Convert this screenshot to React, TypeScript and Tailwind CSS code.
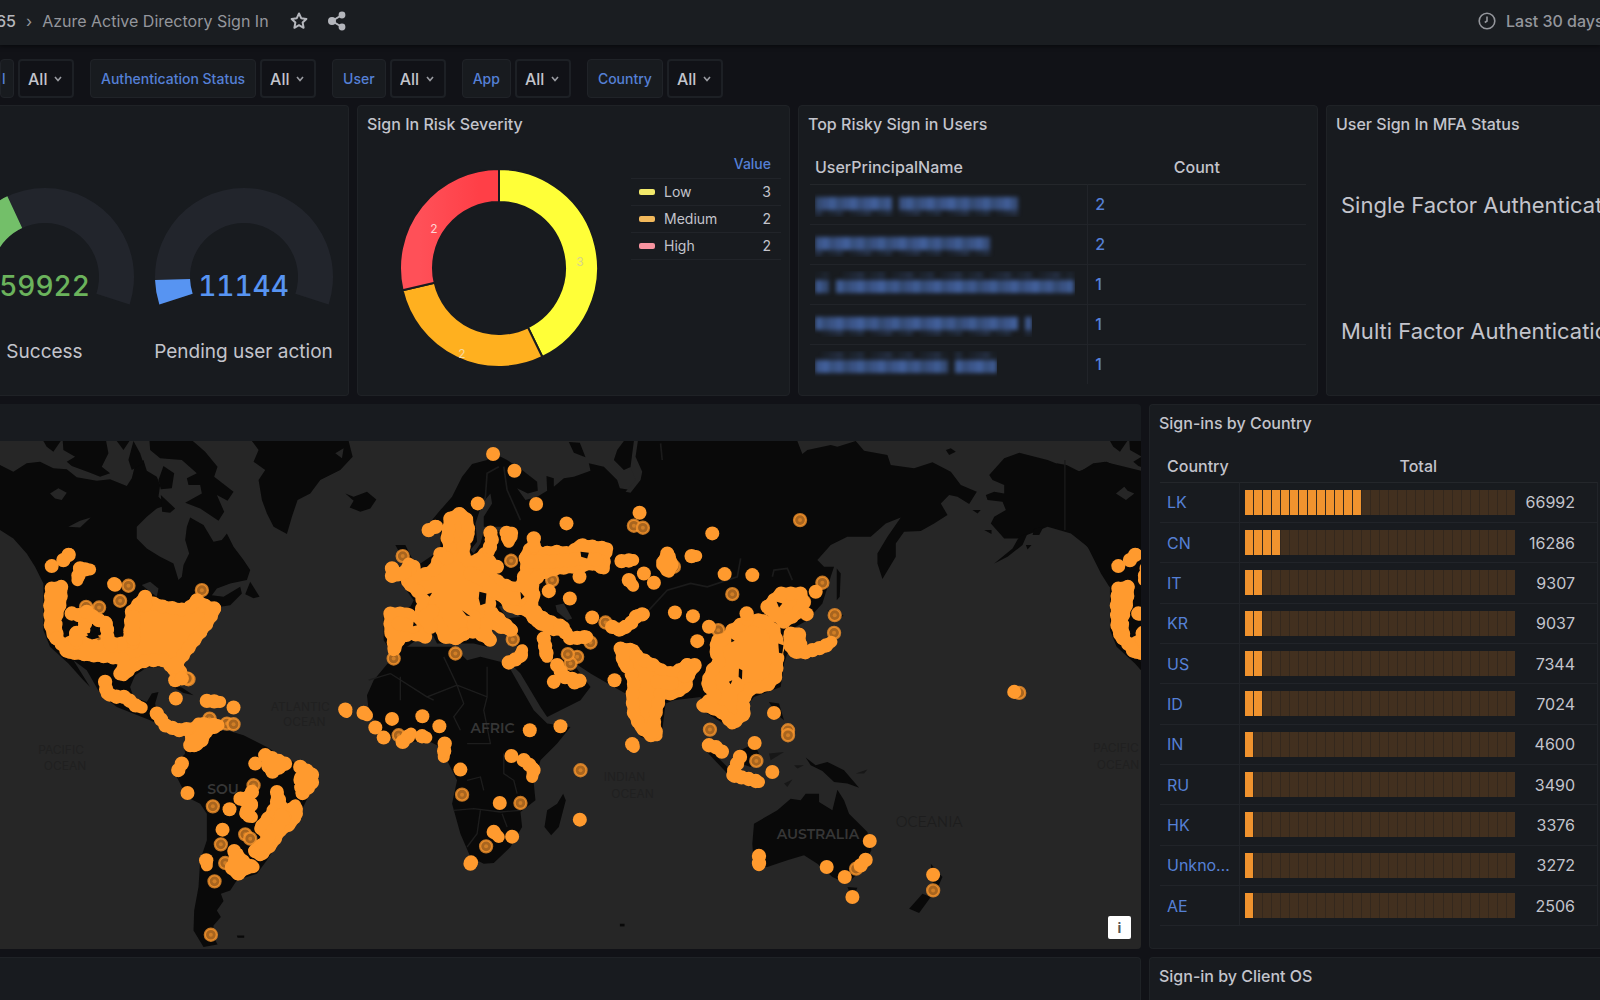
import type { ReactNode } from "react"

interface MapRegion {
  id: string
  x: number
  y: number
  masses?: string[]
  chains?: string[]
  dots?: number[][]
  rings?: number[][]
}

const filters = [
  { id: "protocol", label: "l", first: true },
  { id: "auth-status", label: "Authentication Status" },
  { id: "user", label: "User" },
  { id: "app", label: "App" },
  { id: "country", label: "Country" },
]

const severities = [
  { name: "Low", value: 3, color: "bg-[#f2e96b]" },
  { name: "Medium", value: 2, color: "bg-[#f2b95c]" },
  { name: "High", value: 2, color: "bg-[#f7939f]" },
]

// length is the width of the masked name
const riskyUsers = [
  { length: 209, gap: 76, offset: 0, count: 2 },
  { length: 181, gap: -20, offset: 0, count: 2 },
  { length: 260, gap: 12, offset: 3, count: 1 },
  { length: 217, gap: 200, offset: 0, count: 1 },
  { length: 182, gap: 130, offset: 3, count: 1 },
]

const countries = [
  { code: "LK", total: 66992, cells: 13 },
  { code: "CN", total: 16286, cells: 4 },
  { code: "IT", total: 9307, cells: 2 },
  { code: "KR", total: 9037, cells: 2 },
  { code: "US", total: 7344, cells: 2 },
  { code: "ID", total: 7024, cells: 2 },
  { code: "IN", total: 4600, cells: 1 },
  { code: "RU", total: 3490, cells: 1 },
  { code: "HK", total: 3376, cells: 1 },
  { code: "Unknown", total: 3272, cells: 1 },
  { code: "AE", total: 2506, cells: 1 },
]

const northAmerica: MapRegion = {
  id: "north-america",
  x: 0,
  y: 0,
  masses: [
    "M395 545L430 505L445 515L490 530L560 540L590 510L620 530L645 535L620 580L590 620L560 660L530 700L545 735L520 720L500 690L440 690L400 705L370 735L360 730L380 690L330 680L270 675L200 665L195 650L230 620L250 640L300 650L330 640L385 640L390 600Z",
    "M155 475L185 470L180 520L165 570L170 610L165 625L152 590L150 520Z",
  ],
  chains: [
    "M170 625L210 668",
    "M215 550L260 560L250 600L225 610L230 640",
    "M260 545L285 565L320 580L322 620L335 650",
    "M315 755L320 790L350 800L375 800L405 825L425 832",
    "M190 390L208 372",
    "M240 415L232 450",
    "M255 418L270 418",
    "M435 500L435 530",
    "M400 560L400 640",
  ],
  dots: [[155, 408], [342, 462], [345, 464]],
  rings: [[385, 467], [605, 480], [360, 512], [258, 530], [297, 532], [565, 747], [300, 650], [303, 635]],
}

const regions: MapRegion[] = [
  {
    id: "south-america",
    x: 0,
    y: 750,
    masses: [
      "M570 195L575 165L595 130L655 135L620 150L605 180L590 195Z",
      "M830 335L830 370L815 400L790 430L780 445L810 465L790 490L762 510L780 525L815 490L840 450L870 430L890 400L885 375L870 390L850 390L840 370Z",
      "M702 512L705 545L692 560L712 582L740 562L760 560L735 550Z",
    ],
    chains: [
      "M470 100L495 135L535 150L570 145",
      "M620 62L660 65",
      "M795 225L830 240L855 250L815 275L800 250",
      "M900 260L935 280L935 310L905 340L900 290",
      "M755 335L740 355L720 355L755 370L735 400L755 410",
      "M618 540L620 555",
      "M545 250L533 272",
      "M785 505L810 460L855 410L825 400",
      "M918 275L915 320",
    ],
    dots: [[527, 55], [700, 82], [562, 338], [765, 250], [688, 387], [667, 448], [525, 0], [545, -5]],
    rings: [[628, 115], [680, 130], [700, 132], [760, 315], [735, 462], [750, 475], [675, 548], [638, 378], [662, 492], [643, 603], [632, 763], [560, -5]],
  },
  {
    id: "europe",
    x: 1020,
    y: 0,
    masses: [
      "M330 265L360 250L380 270L385 310L370 340L370 390L400 400L435 370L450 400L470 410L440 410L450 440L490 465L540 480L550 440L560 420L555 380L570 355L600 370L650 365L690 370L720 345L760 350L800 355L790 380L790 415L760 400L700 410L650 415L600 430L575 460L580 500L570 530L600 560L640 580L670 590L640 600L590 575L560 540L510 530L490 500L450 480L445 540L490 580L515 600L480 590L440 570L430 600L450 630L410 605L380 605L350 625L310 620L300 580L270 570L240 570L240 550L250 520L240 490L200 455L205 400L220 410L230 440L260 430L280 420L300 380L330 360L320 320Z",
      "M150 550L200 550L250 590L255 620L215 610L180 620L160 660L160 630L150 600Z",
      "M980 370L970 390L965 405L985 425L995 400Z",
      "M498 308L515 308L505 335Z",
      "M840 655L880 660L890 680L930 700L970 725L1000 730L1040 705L1062 705L1040 740L1035 770L995 790L960 790L950 830L940 870L948 915L930 915L900 890L880 850L875 800L880 760L870 720L850 700Z",
    ],
    chains: [
      "M265 300L290 288",
      "M155 415L155 440L180 430L210 420",
      "M450 308L455 325L445 365",
      "M580 325L580 355",
      "M610 625L620 680L612 650",
      "M660 590L690 625L740 620",
      "M505 697L540 680L545 660",
      "M650 705L670 740L720 752L700 757",
      "M1053 378L1067 378",
      "M865 450L878 467",
      "M815 590L840 600L870 580L890 555L910 552",
      "M843 393L878 390",
      "M875 942L880 950",
      "M300 372L320 385",
      "M270 590L250 560L280 540",
      "M390 430L430 450L470 490L540 510",
      "M570 395L640 395L720 385L780 390",
      "M400 560L400 600",
      "M175 580L225 590",
      "M950 755L1010 760",
    ],
    dots: [[458, 72], [522, 122], [412, 220], [587, 222], [678, 280], [897, 248], [1115, 310], [1152, 432], [1235, 435], [1003, 547], [1057, 558], [1070, 633], [717, 440], [688, 505], [625, 483], [910, 430], [940, 458], [755, 562], [822, 750], [640, 755]],
    rings: [[880, 287], [907, 293], [1175, 492], [187, 378], [635, 450], [512, 392], [1000, 410], [795, 577], [517, 628], [345, 670], [160, 685], [710, 680], [690, 700], [682, 672], [750, 637]],
  },
  {
    id: "africa",
    x: 1020,
    y: 750,
    chains: [
      "M313 190L310 230",
      "M550 240L580 265L575 290",
      "M460 455L475 470",
      "M15 88L18 95",
      "M70 98L80 105",
      "M245 168L258 172",
      "M187 185L212 160",
    ],
    dots: [[105, 142], [130, 172], [155, 116], [246, 108], [297, 138], [568, 150], [660, 138], [360, 268], [478, 368], [513, 227], [718, 418], [515, 469], [392, 546], [390, 550]],
    rings: [[175, 165], [365, 343], [540, 368], [720, 270], [437, 498]],
  },
  {
    id: "east-asia",
    x: 1920,
    y: 0,
    masses: [
      "M275 600L320 570L370 570L400 600L410 640L410 690L405 740L380 765L330 775L305 810L312 850L275 880L250 850L220 835L185 825L200 815L225 800L200 760L215 720L240 690L225 665L230 630L260 630Z",
      "M380 530L420 490L480 490L490 520L470 550L430 575L400 550Z",
      "M450 610L475 610L480 650L495 668L460 665L445 640Z",
    ],
    chains: ["M515 660L550 650L572 635", "M140 705L162 705L130 740", "M318 550L320 570"],
    dots: [[205, 590], [525, 485], [498, 552]],
    rings: [[545, 458], [490, 515], [233, 600], [478, 270], [580, 608], [582, 555]],
  },
  {
    id: "oceania",
    x: 2100,
    y: 660,
    chains: [
      "M25 285L45 290L65 305",
      "M118 320L105 350L95 375L140 385L175 395",
      "M175 617L175 645",
      "M480 645L495 628",
    ],
    dots: [[220, 188], [162, 278], [215, 365], [507, 572], [378, 650], [432, 680], [455, 740], [697, 673], [940, 125]],
    rings: [[262, 240], [262, 255], [28, 238], [167, 332], [466, 655], [697, 720], [955, 128]],
  },
]

function Region({ region }: { region: MapRegion }) {
  return (
    <g transform={`translate(${region.x} ${region.y})`} stroke="#ff9a2e" strokeLinecap="round" strokeLinejoin="round">
      {region.rings?.map(([cx, cy]) => (
        <g key={`${cx}-${cy}`}>
          <circle cx={cx} cy={cy} r="18" fill="#a8651f" strokeOpacity="0.75" strokeWidth="7" />
          <circle cx={cx} cy={cy} r="6" fill="#d07e26" stroke="none" />
        </g>
      ))}
      {region.masses?.map((d) => (
        <g key={d} fill="#ff9a2e">
          <path d={d} strokeWidth="36" />
          <path d={d} strokeWidth="42" strokeDasharray="0 29" />
        </g>
      ))}
      {region.chains?.map((d) => (
        <g key={d} fill="none">
          <path d={d} strokeWidth="36" />
          <path d={d} strokeWidth="43" strokeDasharray="0 22" />
        </g>
      ))}
      {region.dots?.map(([cx, cy]) => (
        <circle key={`${cx}-${cy}`} cx={cx} cy={cy} r="21" fill="#ff9a2e" stroke="none" />
      ))}
    </g>
  )
}

function NorthAmericaLand() {
  return (
    <g fill="#090909">
      <path d="M-30 100L0 105L40 125L80 100L120 95L160 115L200 118L230 142L290 152L330 148L380 168L395 145L405 105L430 90L440 122L470 140L480 165L475 200L500 225L470 235L440 260L410 290L410 325L440 355L480 380L520 400L535 450L545 440L550 405L567 370L555 330L560 290L570 262L610 285L640 335L665 330L680 310L700 350L730 390L750 420L740 450L690 460L650 475L635 495L670 500L720 470L725 490L690 525L660 530L640 560L600 610L560 670L550 700L575 750L545 745L510 710L440 712L405 735L390 770L400 800L440 815L455 790L475 785L465 820L470 850L530 900L560 920L530 910L450 870L350 830L300 790L260 720L220 690L270 770L250 750L205 700L150 650L130 600L130 460L105 410L80 370L40 325L0 300Z" />
      <path d="M130 33H182L160 65L140 50Z" />
      <path d="M188 33H318L325 70L305 110L330 130L300 140L270 128L215 108L200 95L225 80L190 60Z" />
      <path d="M350 33H388L370 60Z" />
      <path d="M400 33L420 70L430 100L395 120L385 90Z" />
      <path d="M448 33H578L615 65L652 110L642 140L700 185L682 212L650 195L672 245L655 272L600 235L555 218L605 190L600 165L565 165L560 145L590 130L545 90L480 85L450 60Z" />
      <path d="M490 108L522 130L515 175L482 178L475 150Z" />
      <path d="M482 195L525 235L510 248L486 245Z" />
      <path d="M755 33H1045L1057 80L1020 120L960 150L930 190L892 210L875 260L860 312L820 290L800 250L785 210L775 150L795 120L760 95L775 60Z" />
      <path d="M1035 190L1060 200L1100 185L1128 208L1110 235L1080 245L1048 232L1060 212Z" />
      <path d="M735 492L750 455L778 500L760 504Z" />
      <g fill="#262626">
        <path d="M150 190L175 175L200 188L185 210L165 205Z" />
        <path d="M205 290L240 272L272 262L240 292Z" />
        <path d="M425 465L450 455L475 475L470 500L450 485Z" />
        <path d="M1005 70L1030 55L1025 85Z" />
      </g>
    </g>
  )
}

function SignInMap() {
  return (
    <svg viewBox="0 0 1140 508" className="block w-full bg-[#262626]" role="img" aria-label="Sign-in locations">
      <g transform="translate(0 -11) scale(0.33333)">
        <NorthAmericaLand />
        <g transform="translate(3197 0)">
          <NorthAmericaLand />
        </g>
        {/* south america */}
        <g transform="translate(0 750)" fill="#090909">
          <path d="M550 190L600 160L680 150L730 165L800 200L830 220L890 250L950 290L900 400L850 460L800 540L770 580L710 600L690 630L662 640L670 662L650 690L662 710L640 735L640 770L652 792L610 800L580 750L582 690L595 620L600 540L620 480L620 400L600 370L560 350L530 290L520 260L555 220Z" />
          <path d="M510 15L545 22L580 45L550 38Z" />
          <path d="M710 765H732V772H712Z" />
        </g>
        {/* europe and asia */}
        <g transform="translate(1020 0)" fill="#090909">
          <path d="M250 300L300 240L335 200L365 140L395 102L440 90L460 70L500 90L545 120L590 155L592 182L562 190L530 175L555 210L590 200L620 182L618 138L640 145L640 170L670 145L700 140L750 122L745 100L790 110L830 150L838 175L870 180L890 150L872 110L850 120L820 90L830 60L850 33H1370L1385 72L1400 60L1470 45L1490 50L1545 33L1570 62L1640 75L1650 105L1720 115L1775 97L1830 125L1860 165L1908 185L1885 222L1850 200L1825 195L1800 220L1820 255L1780 280L1740 303L1690 305L1665 340L1665 380L1625 447L1610 400L1610 370L1640 320L1680 262L1635 280L1590 320L1520 320L1470 345L1430 390L1450 410L1480 410L1470 440L1445 520L1400 570L1330 610L1350 650L1395 680L1340 670L1330 700L1320 770L1240 800L1200 850L1180 900L1100 850L1080 800L1000 810L975 820L965 900L940 930L900 920L870 850L855 790L820 770L750 730L690 690L750 770L720 810L620 860L600 830L540 730L510 700L530 650L520 620L470 590L460 560L440 650L400 640L290 640L270 600L200 650L150 660L130 630L130 540L210 530L220 510L190 470L240 400L300 360L300 300Z" />
          <path d="M685 36L718 38L735 82L700 68Z" />
          <path d="M165 345L195 345L210 375L240 430L200 470L180 460L195 400Z" />
          <path d="M1488 415L1500 430L1497 500L1488 510Z" />
          <path d="M1460 540L1508 555L1490 575Z" />
          <path d="M1815 60L1830 55L1845 65L1825 75Z" />
          <g fill="#262626">
            <path d="M410 335L405 280L425 220L450 190L455 220L430 260L430 290L520 290L525 300L430 305L420 340L400 370L390 360Z" />
            <path d="M475 530L500 520L540 560L500 565Z" />
            <path d="M645 525L670 520L695 565L680 570L650 545Z" />
            <path d="M855 185L885 150L870 110L880 33H892L885 80L905 125L900 150L870 188Z" />
          </g>
          <g fill="none" stroke="#1b1b1b" strokeWidth="5">
            <path d="M475 110L440 130L435 200L420 240M490 110L500 180L540 270M960 40L965 90" />
            <path d="M925 540L980 480L1050 460L1100 470L1190 440L1200 385M1295 440L1300 420L1340 415L1355 450" />
          </g>
        </g>
        {/* alaska peninsula and border */}
        <g transform="translate(2580 0)" fill="#090909">
          <path d="M385 135L430 85L475 68L560 90L650 125L730 95L850 125L845 480L745 470L720 430L680 350L630 310L560 290L510 310L470 325L430 325L390 280L400 260L435 240L425 215L380 210L375 195L400 185L430 190L430 165L395 150Z" />
          <path d="M500 310L485 345L440 380L400 400L455 355L475 320Z" />
          <path d="M520 295L548 290L535 315L515 315Z" />
          <path d="M370 300H392V312ZM335 240L360 240L350 250ZM495 345L512 345L500 358Z" />
          <path d="M612 90V300" stroke="#1b1b1b" strokeWidth="4" />
          <path d="M765 190L790 170L800 182L820 190L795 210Z" fill="#262626" />
        </g>
        {/* africa */}
        <g transform="translate(1020 750)" fill="#090909">
          <path d="M180 -100L150 -60L100 0L80 45L85 90L120 150L180 190L260 180L300 200L330 260L350 300L335 370L360 460L390 530L430 550L460 548L510 500L545 440L540 395L585 360L580 310L600 240L650 190L690 140L620 130L580 90L540 20L500 -50L420 -70L380 -60L340 -100Z" />
          <path d="M668 340L676 360L655 440L632 465L612 440L620 390L650 370Z" />
          <path d="M838 730H852V738H838Z" />
          <g fill="none" stroke="#1d1d1d" strokeWidth="4">
            <path d="M150 -20L260 50L350 15L310 -70M260 50L280 60M350 15L440 50V-40M350 15L370 70L340 110L360 150M180 -10V60M85 0L150 -20M440 50L430 90L450 190L380 190M340 390L400 385L480 395L540 390M490 220V280L520 300L530 340M380 300L420 290L430 330M420 390L410 460L380 500M485 400L500 440" />
          </g>
        </g>
        {/* oceania */}
        <g transform="translate(2100 660)" fill="#090909">
          <path d="M160 520L230 480L270 445L300 450L315 430L355 430L355 455L395 480L410 418L430 450L445 490L500 545L512 600L480 660L440 700L395 680L350 640L310 615L260 630L200 650L160 650L155 580Z" />
          <path d="M315 322L345 345L380 335L430 360L475 412L440 400L400 395L365 362L330 345Z" />
          <path d="M665 730L690 740L655 788L625 775Z" />
          <path d="M690 640L725 680L700 735Z" />
          <path d="M5 290L40 310L90 360L80 370Z" />
          <path d="M120 300L160 280L180 320L150 350L120 340Z" />
          <path d="M205 155L235 160L250 210L225 190ZM440 710L470 712L455 745Z" />
          <path d="M465 370L500 358L490 370ZM250 400L275 388L260 410ZM280 345L310 345L290 355ZM205 310L250 305L210 330Z" fill="#171717" />
        </g>
        <Region region={northAmerica} />
        <Region region={{ ...northAmerica, id: "wrap", x: 3197 }} />
        {regions.map((region) => (
          <Region key={region.id} region={region} />
        ))}
        {/* small openings inside the densest clusters */}
        <g fill="#090909">
          <path d="M1437 485L1458 490L1455 520L1440 525L1435 505Z" />
          <path d="M1740 365L1765 368L1760 385L1742 380Z" />
          <path d="M1560 485L1572 500L1562 508ZM1240 575L1250 585L1238 588ZM1385 540L1410 558L1398 556ZM1280 492L1295 488L1288 500Z" />
          <path d="M2215 715L2225 720L2224 748L2214 740ZM2192 625L2202 632L2192 636ZM2185 755L2195 750L2190 762Z" />
          <path d="M2328 515L2345 520L2335 532Z" />
          <path d="M260 610L285 605L298 622L275 628ZM340 570L365 575L370 605L345 620Z" />
          <path d="M2333 640L2348 645L2345 670L2335 668Z" />
        </g>
      </g>
      <g className="font-[Montserrat,'Noto_Sans',sans-serif] text-[14px] font-semibold" fill="#363636">
        <text x="470" y="292">AFRIC</text>
        <text x="207" y="353">SOU</text>
        <text x="776" y="398">AUSTRALIA</text>
        <text x="895" y="386" fill="#1d1d1d" className="font-normal">OCEANIA</text>
      </g>
      <g className="font-[Inter,sans-serif] text-[12px]" fill="#202020" textAnchor="middle">
        <text x="61" y="313">PACIFIC</text>
        <text x="65" y="329">OCEAN</text>
        <text x="300" y="270">ATLANTIC</text>
        <text x="304" y="285">OCEAN</text>
        <text x="624" y="340">INDIAN</text>
        <text x="632" y="357">OCEAN</text>
        <text x="1115" y="311">PACIFIC</text>
        <text x="1117" y="328">OCEAN</text>
      </g>
    </svg>
  )
}

function Panel({ title, children, className = "" }: { title?: string; children?: ReactNode; className?: string }) {
  return (
    <section className={`flex min-w-0 flex-col overflow-hidden rounded-sm border border-[#1f2226] bg-[#181b1f] ${className}`}>
      <h2 className="h-[37px] shrink-0 whitespace-nowrap px-[9px] text-base leading-[37px] font-medium text-[#c3c4cc]">{title}</h2>
      {children}
    </section>
  )
}

// point on a circle, angle in degrees clockwise from the top
function polar(cx: number, cy: number, r: number, angle: number) {
  const rad = ((angle - 90) * Math.PI) / 180
  return `${cx + r * Math.cos(rad)} ${cy + r * Math.sin(rad)}`
}

function ring(c: number, outer: number, inner: number, from: number, to: number) {
  const large = to - from > 180 ? 1 : 0
  return `M${polar(c, c, outer, from)}A${outer} ${outer} 0 ${large} 1 ${polar(c, c, outer, to)}L${polar(c, c, inner, to)}A${inner} ${inner} 0 ${large} 0 ${polar(c, c, inner, from)}Z`
}

function Gauge({ value, label, end, color, text }: { value: string; label: string; end: number; color: string; text: string }) {
  return (
    <figure className="flex w-[199px] shrink-0 flex-col items-center">
      <div className="relative">
        <svg viewBox="0 0 178 122" className="h-[122px] w-[178px]">
          <path d={ring(89, 89, 54, -108, 108)} fill="#22252c" />
          <path d={ring(89, 89, 54, -108, end)} fill={color} />
        </svg>
        <span className={`absolute inset-x-0 bottom-[10px] text-center text-[28px] leading-7 font-medium tabular-nums ${text}`}>{value}</span>
      </div>
      <figcaption className="mt-7 whitespace-nowrap text-[19px] leading-7 text-[#c3c4cc]">{label}</figcaption>
    </figure>
  )
}

function Donut() {
  return (
    <svg viewBox="0 0 198 198" className="h-[198px] w-[198px] shrink-0">
      <defs>
        <linearGradient id="high" x1="0" x2="1">
          <stop offset="0.2" stopColor="#ff5058" />
          <stop offset="0.8" stopColor="#ff3f47" />
        </linearGradient>
      </defs>
      <g stroke="#181b1f" strokeWidth="2">
        <path d={ring(99, 99, 66, 0, 154)} fill="#ffff38" />
        <path d={ring(99, 99, 66, 154, 257)} fill="#ffb01f" />
        <path d={ring(99, 99, 66, 257, 360)} fill="url(#high)" />
      </g>
      <g className="text-[12px]" textAnchor="middle">
        <text x="180" y="97" fill="#d8d48c">3</text>
        <text x="62" y="189" fill="#f7d9a0">2</text>
        <text x="34" y="64" fill="#ffd3d6">2</text>
      </g>
    </svg>
  )
}

function MaskedName({ length, gap, offset }: { length: number; gap: number; offset: number }) {
  const blocks = Array.from({ length: Math.floor(length / 7) }, (_, i) => i)
  return (
    <svg viewBox={`0 0 ${length} 26`} width={length} height="26" className="block max-w-none" aria-label="Hidden name">
      <g fill="#5077c4" className="blur-[2px]">
        {blocks.map((i) => {
          if (Math.abs(i * 7 - gap) < 4) return null
          const shade = 0.5 + ((i * 37 + length) % 11) / 40
          return (
            <g key={i}>
              <rect x={i * 7} y={6 + offset} width="7" height="13" opacity={shade} />
              <rect x={i * 7} y={offset ? 1 : 19} width="7" height="6" opacity={((i * 23 + length) % 7) / 26} />
            </g>
          )
        })}
      </g>
    </svg>
  )
}

export default function App() {
  return (
    <div className="h-screen overflow-hidden bg-[#111217] font-[Inter,sans-serif] text-[#c3c4cc]">
      <header className="flex h-[45px] items-center overflow-hidden bg-[#1a1d21] pb-1 text-base whitespace-nowrap text-[#94969c] shadow-[0_1px_4px_#08090c]">
        <nav className="flex items-center" aria-label="Breadcrumb">
          <a href="#folder" className="-ml-1 font-medium text-[#b4b5bb]">65</a>
          <span className="mx-[10px]">›</span>
          <a href="#dashboard">Azure Active Directory Sign In</a>
        </nav>
        <button className="ml-5" aria-label="Mark as favorite">
          <svg viewBox="0 0 20 20" className="size-5" fill="none" stroke="#b4b6bc" strokeWidth="2" strokeLinejoin="round">
            <path d="M10 2.5L12.2 7.2L17.4 7.9L13.6 11.4L14.6 16.8L10 14.2L5.4 16.8L6.4 11.4L2.6 7.9L7.8 7.2Z" />
          </svg>
        </button>
        <button className="ml-[18px]" aria-label="Share dashboard">
          <svg viewBox="0 0 20 20" className="size-5" fill="#b4b6bc" stroke="#b4b6bc" strokeWidth="2">
            <path d="M15 4L5 10L15 16" fill="none" />
            <circle cx="15" cy="4" r="2.4" />
            <circle cx="5" cy="10" r="3" />
            <circle cx="15" cy="16" r="2.4" />
          </svg>
        </button>
        <button className="-mr-4 ml-auto flex w-[138px] shrink-0 items-center gap-[10px]">
          <svg viewBox="0 0 18 18" className="size-[18px] shrink-0" fill="none" stroke="#94969c" strokeWidth="1.6">
            <circle cx="9" cy="9" r="7.8" />
            <path d="M9 4.5V9L6.8 10.5" />
          </svg>
          <span className="font-medium">Last 30 days</span>
        </button>
      </header>

      <form className="flex gap-4 pt-[14px] pb-[7px]">
        {filters.map((filter) => (
          <div key={filter.id} className="flex h-[39px] gap-1">
            <label
              htmlFor={filter.id}
              className={`flex items-center rounded-sm border border-[#202328] bg-[#181b1f] text-sm font-medium text-[#5580d6] ${filter.first ? "w-[14px] pl-px" : "px-[10px]"}`}
            >
              {filter.label}
            </label>
            <div className="relative">
              <select
                id={filter.id}
                className="h-full w-14 appearance-none rounded-sm border-2 border-[#1d2025] bg-[#111217] pl-2 text-base font-medium text-[#c3c4cc]"
              >
                <option>All</option>
              </select>
              <svg viewBox="0 0 8 6" className="pointer-events-none absolute top-[17px] right-3 h-[6px] w-2" fill="none" stroke="#9a9ca2" strokeWidth="1.6">
                <path d="M1 1L4 4.5L7 1" />
              </svg>
            </div>
          </div>
        ))}
      </form>

      <main className="flex flex-col gap-2">
        <div className="grid grid-cols-[349fr_433fr_520fr_274fr] gap-2">
          <Panel className="rounded-l-none border-l-0">
            <div className="-ml-[55px] flex pt-[45px]">
              <Gauge value="59922" label="Success" end={-25} color="#73bf69" text="text-[#6bb35c]" />
              <Gauge value="11144" label="Pending user action" end={-92} color="#5794f2" text="text-[#5794f2]" />
            </div>
          </Panel>

          <Panel title="Sign In Risk Severity">
            <div className="flex items-start justify-between pr-2 pb-[28px] pl-[42px]">
              <div className="pt-[26px]">
                <Donut />
              </div>
              <table className="mt-2 w-[150px] text-sm">
                <thead>
                  <tr className="h-[27px] border-b border-[#212429]">
                    <th colSpan={2} className="pr-[10px] text-right font-medium text-[#5580d6]">Value</th>
                  </tr>
                </thead>
                <tbody>
                  {severities.map((item) => (
                    <tr key={item.name} className="h-[27px] border-b border-[#212429]">
                      <td className="pl-2">
                        <span className="flex items-center gap-[9px]">
                          <span className={`h-[6px] w-4 rounded-xs ${item.color}`} />
                          {item.name}
                        </span>
                      </td>
                      <td className="pr-[10px] text-right">{item.value}</td>
                    </tr>
                  ))}
                </tbody>
              </table>
            </div>
          </Panel>

          <Panel title="Top Risky Sign in Users">
            <div className="px-[11px] pt-2">
              <table className="w-full table-fixed text-base">
                <thead>
                  <tr className="h-[33px] border-b border-[#24272b]">
                    <th className="w-[56%] pl-[5px] text-left font-medium">UserPrincipalName</th>
                    <th className="font-medium">Count</th>
                  </tr>
                </thead>
                <tbody>
                  {riskyUsers.map((user, i) => (
                    <tr key={i} className="h-10 border-b border-[#212429] last:border-0">
                      <td className="border-r border-[#212429] pl-[5px]">
                        <MaskedName length={user.length} gap={user.gap} offset={user.offset} />
                      </td>
                      <td className="pl-[7px] font-medium text-[#5580d6]">
                        <a href="#user">{user.count}</a>
                      </td>
                    </tr>
                  ))}
                </tbody>
              </table>
            </div>
          </Panel>

          <Panel title="User Sign In MFA Status" className="rounded-r-none border-r-0">
            <div className="flex flex-col gap-[94px] pt-[46px] pl-[14px] text-[22px] leading-8 whitespace-nowrap">
              <p>Single Factor Authentication</p>
              <p>Multi Factor Authentication</p>
            </div>
          </Panel>
        </div>

        <div className="grid grid-cols-[1141fr_451fr] gap-2">
          <Panel className="rounded-l-none border-0">
            <div className="relative">
              <SignInMap />
              <button className="absolute right-[10px] bottom-[10px] flex size-[23px] items-center justify-center rounded-xs bg-white text-sm font-bold text-[#555]">
                i
              </button>
            </div>
          </Panel>

          <Panel title="Sign-ins by Country" className="rounded-r-none border-r-0">
            <div className="grid flex-1 pt-2 pr-[2px] pb-[22px] pl-[10px]">
              <table className="w-full table-fixed text-base">
                <thead>
                  <tr className="h-8 border-b border-[#24272b]">
                    <th className="w-[79px] pl-[7px] text-left font-medium">Country</th>
                    <th className="font-medium">Total</th>
                  </tr>
                </thead>
                <tbody>
                  {countries.map((country) => (
                    <tr key={country.code} className="h-10 border-b border-[#212429]">
                      <td className="truncate border-r border-[#212429] pr-2 pl-[7px] text-[#5580d6]">
                        <a href="#country">{country.code}</a>
                      </td>
                      <td className="border-r border-[#212429] pr-[22px] pl-[5px]">
                        <div className="flex items-center">
                          <div className="flex h-[25px] flex-1 gap-px bg-[#34281d]">
                            {Array.from({ length: 30 }, (_, i) => (
                              <span key={i} className={`flex-1 ${i < country.cells ? "bg-[#f0932e]" : "bg-[#42301f]"}`} />
                            ))}
                          </div>
                          <span className="w-[60px] text-right">{country.total}</span>
                        </div>
                      </td>
                    </tr>
                  ))}
                </tbody>
              </table>
            </div>
          </Panel>
        </div>

        <div className="grid grid-cols-[1141fr_451fr] gap-2">
          <Panel className="h-40 rounded-l-none border-l-0" />
          <Panel title="Sign-in by Client OS" className="h-40 rounded-r-none border-r-0" />
        </div>
      </main>
    </div>
  )
}
